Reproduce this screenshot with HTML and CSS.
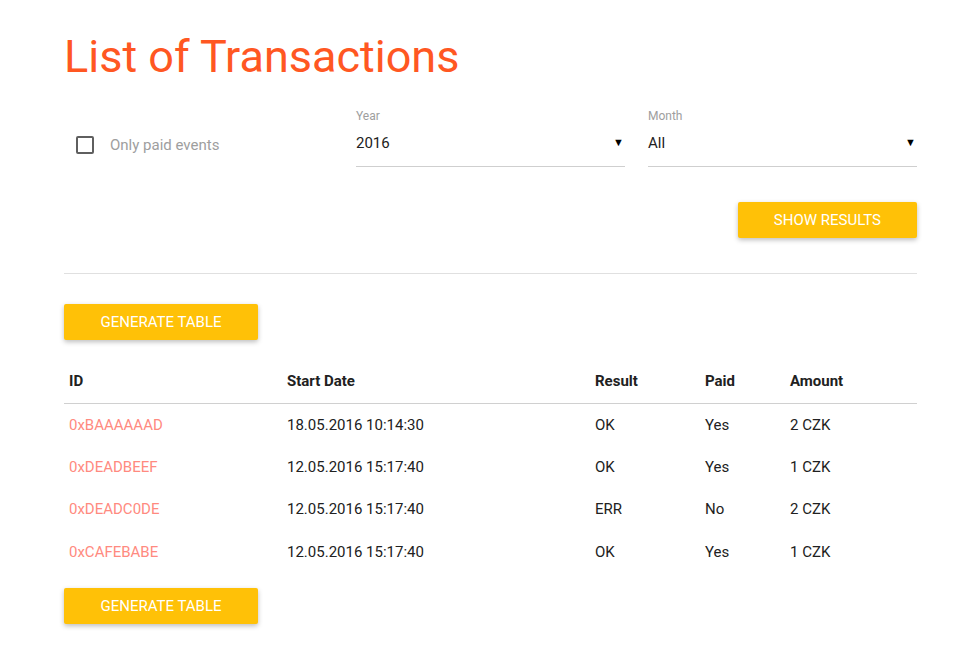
FILE: index.html
```html
<!DOCTYPE html>
<html lang="en">
<head>
<meta charset="utf-8">
<title>List of Transactions</title>
<link rel="stylesheet" href="styles.css">
</head>
<body>
<main class="page">
  <h1 class="title">List of Transactions</h1>

  <section class="filters">
    <label class="check">
      <span class="check-box"></span>
      <span class="check-label">Only paid events</span>
    </label>
    <div class="field">
      <div class="field-label">Year</div>
      <div class="field-select"><span>2016</span><span class="arrow">▼</span></div>
    </div>
    <div class="field">
      <div class="field-label">Month</div>
      <div class="field-select"><span>All</span><span class="arrow">▼</span></div>
    </div>
  </section>

  <div class="actions">
    <button class="btn">Show Results</button>
  </div>

  <hr class="divider">

  <button class="btn btn-gen">Generate Table</button>

  <table class="tx">
    <thead>
      <tr><th class="c-id">ID</th><th class="c-date">Start Date</th><th class="c-res">Result</th><th class="c-paid">Paid</th><th class="c-amt">Amount</th></tr>
    </thead>
    <tbody>
      <tr><td class="id">0xBAAAAAAD</td><td>18.05.2016 10:14:30</td><td>OK</td><td>Yes</td><td>2 CZK</td></tr>
      <tr><td class="id">0xDEADBEEF</td><td>12.05.2016 15:17:40</td><td>OK</td><td>Yes</td><td>1 CZK</td></tr>
      <tr><td class="id">0xDEADC0DE</td><td>12.05.2016 15:17:40</td><td>ERR</td><td>No</td><td>2 CZK</td></tr>
      <tr><td class="id">0xCAFEBABE</td><td>12.05.2016 15:17:40</td><td>OK</td><td>Yes</td><td>1 CZK</td></tr>
    </tbody>
  </table>

  <button class="btn btn-gen btn-bottom">Generate Table</button>
</main>
</body>
</html>
```

FILE: styles.css
```css
* { box-sizing: border-box; }

html, body {
  margin: 0;
  padding: 0;
  background: #fff;
}

body {
  font-family: Roboto, "Liberation Sans", Arial, sans-serif;
  font-size: 15px;
  color: #212121;
}

.page {
  width: 853px;
  margin-left: 64px;
  padding-bottom: 20px;
  display: flex;
  flex-direction: column;
  align-items: flex-start;
}

.title {
  margin: 29px 0 0 0;
  font-size: 45px;
  line-height: 56px;
  font-weight: 400;
  color: #ff5722;
}

.filters {
  margin-top: 23px;
  width: 100%;
  display: grid;
  grid-template-columns: 269px 269px 269px;
  column-gap: 23px;
}

.check {
  display: flex;
  align-items: center;
  padding-left: 12px;
  padding-top: 16px;
  height: 58px;
}

.check-box {
  width: 18px;
  height: 18px;
  border: 2px solid #5f5f5f;
  border-radius: 2px;
  flex: none;
}

.check-label {
  margin-left: 16px;
  color: #9e9e9e;
  font-size: 15px;
  line-height: 18px;
}

.field-label {
  font-size: 12px;
  line-height: 16px;
  color: #9e9e9e;
}

.field-select {
  display: flex;
  justify-content: space-between;
  align-items: center;
  padding: 10px 1px 14px 0;
  line-height: 18px;
  border-bottom: 1px solid #cfcfcf;
  color: #212121;
}

.arrow {
  font-size: 11px;
  color: #000;
}

.actions {
  width: 100%;
  display: flex;
  justify-content: flex-end;
  margin-top: 35px;
}

.btn {
  font-family: Roboto, "Liberation Sans", Arial, sans-serif;
  font-size: 15px;
  font-weight: 400;
  text-transform: uppercase;
  color: #fff;
  background: #ffc107;
  border: none;
  border-radius: 2px;
  height: 36px;
  padding: 0 36px;
  box-shadow: 0 2px 5px rgba(0,0,0,0.26);
  cursor: pointer;
}

.divider {
  width: 100%;
  margin: 35px 0 0 0;
  border: none;
  border-top: 1px solid #e0e0e0;
}

.btn-gen {
  margin-top: 30px;
  width: 194px;
  padding: 0;
}

.tx {
  margin-top: 20px;
  width: 100%;
  border-collapse: collapse;
}

.tx th {
  text-align: left;
  font-weight: 700;
  height: 43px;
  padding: 0 5px;
  border-bottom: 1px solid #d0d0d0;
  color: #212121;
}

.tx td {
  height: 42.5px;
  padding: 0 5px;
  color: #212121;
}

.tx td.id { color: #ff8a80; }

.c-id { width: 218px; }
.c-date { width: 308px; }
.c-res { width: 110px; }
.c-paid { width: 85px; }

.btn-bottom { margin-top: 15px; }
```
